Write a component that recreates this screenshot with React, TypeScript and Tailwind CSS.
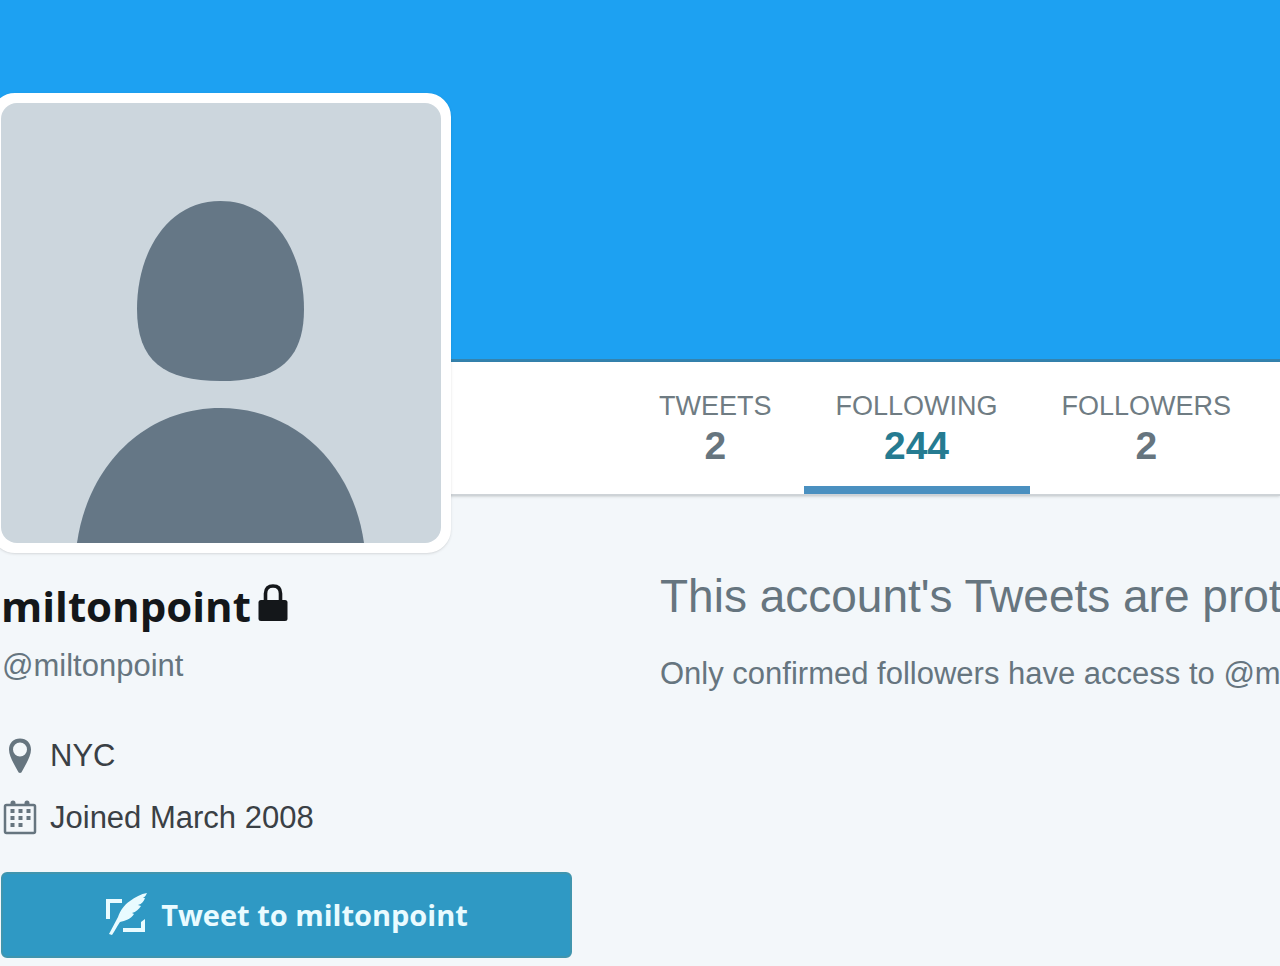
const stats = [
  { label: 'TWEETS', value: '2', active: false },
  { label: 'FOLLOWING', value: '244', active: true },
  { label: 'FOLLOWERS', value: '2', active: false },
];

function DefaultAvatar() {
  return (
    <svg viewBox="0 0 440 440" className="block w-full rounded-2xl bg-[#ccd6dd]" role="img" aria-label="Default avatar">
      <g fill="#657786">
        <path d="M219.500 98C273 98 303 150 303 206C303 258 276 278 219.500 278C163 278 136 258 136 206C136 150 166 98 219.500 98Z" />
        <path d="M76 440C87 362 144 305 219.500 305C295 305 352 362 363 440Z" />
      </g>
    </svg>
  );
}

function LockIcon() {
  return (
    <svg viewBox="0 0 30 38" className="mb-1.5 h-[38px] w-[30px]" fill="#14171a" aria-hidden="true">
      <path d="M3 16H27Q29.500 16 29.500 18.500V34.500Q29.500 37 27 37H3Q0.500 37 0.500 34.500V18.500Q0.500 16 3 16Z" />
      <path d="M7.500 18V9.500C7.500 4.500 10.500 2 15 2C19.500 2 22.500 4.500 22.500 9.500V18" fill="none" stroke="#14171a" strokeWidth="3.600" />
    </svg>
  );
}

function PinIcon() {
  return (
    <svg viewBox="0 0 36 36" className="size-9" fill="#66757f" aria-hidden="true">
      <path fillRule="evenodd" d="M18 0.500C24.500 0.500 29 5 29 11.500C29 18 24.500 25 20.500 32.500Q19.500 35 18 35T15.500 32.500C11.500 25 7 18 7 11.500C7 5 11.500 0.500 18 0.500ZM18 4.500A7 7 0 1 0 18 18.500A7 7 0 1 0 18 4.500Z" />
    </svg>
  );
}

function CalendarIcon() {
  return (
    <svg viewBox="0 0 36 36" className="size-9" fill="#66757f" aria-hidden="true">
      <rect x="3" y="5" width="30" height="28" rx="1.500" fill="none" stroke="#66757f" strokeWidth="2.500" />
      <path d="M8.500 6V3A2.500 2.500 0 0 1 13.500 3V6ZM22.500 6V3A2.500 2.500 0 0 1 27.500 3V6Z" />
      <path d="M8.500 9h4v4h-4zM16.500 9h4v4h-4zM24.500 9h4v4h-4zM8.500 16h4v4h-4zM16.500 16h4v4h-4zM24.500 16h4v4h-4zM8.500 23h4v4h-4zM16.500 23h4v4h-4z" />
    </svg>
  );
}

function ComposeIcon() {
  return (
    <svg viewBox="0 0 44 44" className="size-11" fill="#e9fbff" aria-hidden="true">
      <path d="M1 6H17V10H5V26H1Z" />
      <path d="M40 26V39H18V35H36V29Z" />
      <path d="M42 0C36 1 30 4 25 8C19 12 15 18 13 24C10 30 7 35 4 41L7 42C10 38 12 33 15 29C20 28 26 26 29 21L27 20C31 19 34 16 36 13L33 12C37 11 39 8 40 5L38 5C40 4 41 2 42 0Z" />
    </svg>
  );
}

export default function App() {
  return (
    <div className="min-h-screen overflow-hidden bg-[#f3f7fa] font-['Liberation_Sans',Arial,sans-serif] text-[#66757f]">
      <header>
        <div className="h-[362px] border-b-3 border-[#3483ae] bg-[#1da1f2]" />
        <nav aria-label="Profile" className="flex h-[134px] border-b-2 border-[#ced3d7] bg-white pl-[627px] shadow-sm">
          {stats.map((s) => (
            <a
              key={s.label}
              href="#"
              aria-current={s.active ? 'page' : undefined}
              className={
                s.active
                  ? 'flex flex-col items-center border-b-8 border-[#4a90c0] px-8 pt-7 text-[#257b91]'
                  : 'flex flex-col items-center px-8 pt-7'
              }
            >
              <span className="text-[27px] leading-8 text-[#6f7c83]">{s.label}</span>
              <span className="text-[39px] leading-12 font-bold">{s.value}</span>
            </a>
          ))}
        </nav>
      </header>

      <div className="flex items-start gap-[88px]">
        <aside className="relative -mt-[403px] w-[572px] shrink-0 pl-px">
          <div className="-ml-[10px] w-[460px] rounded-3xl border-10 border-white bg-white shadow-sm">
            <DefaultAvatar />
          </div>
          <div className="flex items-center gap-[7px] pt-[27px]">
            <h1 className="font-['Open_Sans',sans-serif] text-[42px] leading-13 font-bold text-[#14171a]">miltonpoint</h1>
            <LockIcon />
          </div>
          <p className="pt-4 pl-px text-[31px] leading-9">@miltonpoint</p>
          <ul className="flex flex-col gap-[26px] pt-[54px] pl-px text-[31px] leading-9 text-[#3a4045]">
            <li className="flex items-center gap-3">
              <PinIcon />
              NYC
            </li>
            <li className="flex items-center gap-3">
              <CalendarIcon />
              Joined March 2008
            </li>
          </ul>
          <button
            type="button"
            className="mt-9 flex h-[86px] w-full items-center justify-center gap-3 rounded-md border-2 border-[#4095ae] bg-[#2f99c4] font-['Open_Sans',sans-serif] text-[29px] font-bold text-[#e9fbff]"
          >
            <ComposeIcon />
            Tweet to miltonpoint
          </button>
        </aside>

        <main className="min-w-0 flex-1 overflow-hidden pt-[74px] whitespace-nowrap">
          <h2 className="text-[46px] leading-13">This account's Tweets are prot</h2>
          <p className="pt-[34px] text-[31px] leading-9">Only confirmed followers have access to @m</p>
        </main>
      </div>
    </div>
  );
}
